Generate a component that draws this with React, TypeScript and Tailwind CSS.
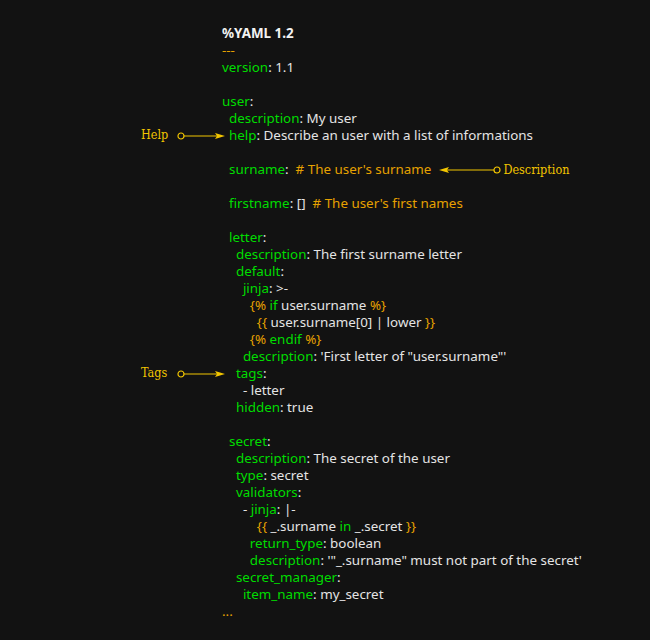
import React from 'react'

type Seg = [string, 'k' | 't' | 'o' | 'b']

const colorOf = {
  k: 'text-[#00dd00]',
  t: 'text-[#e4e4e4]',
  o: 'text-[#e6a100]',
  b: 'text-[#f2f2f2] font-bold',
}

const lines: { segs: Seg[]; left?: string; right?: string }[] = [
  { segs: [['%YAML 1.2', 'b']] },
  { segs: [['---', 'o']] },
  { segs: [['version', 'k'], [': 1.1', 't']] },
  { segs: [] },
  { segs: [['user', 'k'], [':', 't']] },
  { segs: [['  description', 'k'], [': My user', 't']] },
  { segs: [['  help', 'k'], [': Describe an user with a list of informations', 't']], left: 'Help' },
  { segs: [] },
  { segs: [['  surname', 'k'], [':  ', 't'], ["# The user's surname", 'o']], right: 'Description' },
  { segs: [] },
  { segs: [['  firstname', 'k'], [': []  ', 't'], ["# The user's first names", 'o']] },
  { segs: [] },
  { segs: [['  letter', 'k'], [':', 't']] },
  { segs: [['    description', 'k'], [': The first surname letter', 't']] },
  { segs: [['    default', 'k'], [':', 't']] },
  { segs: [['      jinja', 'k'], [': >-', 't']] },
  { segs: [['        {% ', 'o'], ['if', 'k'], [' user.surname ', 't'], ['%}', 'o']] },
  { segs: [['          {{ ', 'o'], ['user.surname[0] | lower', 't'], [' }}', 'o']] },
  { segs: [['        {% ', 'o'], ['endif', 'k'], [' %}', 'o']] },
  { segs: [['      description', 'k'], [': \'First letter of "user.surname"\'', 't']] },
  { segs: [['    tags', 'k'], [':', 't']], left: 'Tags' },
  { segs: [['      - letter', 't']] },
  { segs: [['    hidden', 'k'], [': true', 't']] },
  { segs: [] },
  { segs: [['  secret', 'k'], [':', 't']] },
  { segs: [['    description', 'k'], [': The secret of the user', 't']] },
  { segs: [['    type', 'k'], [': secret', 't']] },
  { segs: [['    validators', 'k'], [':', 't']] },
  { segs: [['      - ', 't'], ['jinja', 'k'], [': |-', 't']] },
  { segs: [['          {{ ', 'o'], ['_.surname ', 't'], ['in', 'k'], [' _.secret ', 't'], ['}}', 'o']] },
  { segs: [['        return_type', 'k'], [': boolean', 't']] },
  { segs: [['        description', 'k'], [': \'"_.surname" must not part of the secret\'', 't']] },
  { segs: [['    secret_manager', 'k'], [':', 't']] },
  { segs: [['      item_name', 'k'], [': my_secret', 't']] },
  { segs: [['...', 'o']] },
]

function ArrowRight() {
  return (
    <svg width="48" height="8" viewBox="0 0 48 8" className="block">
      <circle cx="4" cy="4" r="3" fill="none" stroke="#f2c500" strokeWidth="1.2" />
      <line x1="7" y1="4" x2="40" y2="4" stroke="#f2c500" strokeWidth="1.2" />
      <path d="M48 4 L38 1 L40 4 L38 7 Z" fill="#f2c500" />
    </svg>
  )
}

function ArrowLeft() {
  return (
    <svg width="62" height="8" viewBox="0 0 62 8" className="block">
      <path d="M0 4 L10 1 L8 4 L10 7 Z" fill="#f2c500" />
      <line x1="8" y1="4" x2="55" y2="4" stroke="#f2c500" strokeWidth="1.2" />
      <circle cx="58" cy="4" r="3" fill="none" stroke="#f2c500" strokeWidth="1.2" />
    </svg>
  )
}

export default function App() {
  return (
    <div className="w-[650px] h-[640px] bg-[#121212] pt-[25px] overflow-hidden">
      {lines.map((line, i) => (
        <div key={i} className="flex h-[17px] items-center">
          <div className="w-[222px] shrink-0 flex items-center">
            {line.left && (
              <div className="ml-[141px] flex items-center gap-[6px]">
                <span className="text-[12.5px] text-[#f2c500] font-['DejaVu_Serif_Condensed','DejaVu_Serif',serif] w-[30px]">
                  {line.left}
                </span>
                <ArrowRight />
              </div>
            )}
          </div>
          <div className="whitespace-pre text-[13.4px] leading-[17px] font-['Noto_Sans',sans-serif] flex items-center">
            {line.segs.map((s, j) => (
              <span key={j} className={colorOf[s[1]]}>
                {s[0]}
              </span>
            ))}
            {line.right && (
              <div className="flex items-center ml-[8px] gap-[2px]">
                <ArrowLeft />
                <span className="text-[12.5px] text-[#f2c500] font-['DejaVu_Serif_Condensed','DejaVu_Serif',serif]">
                  {line.right}
                </span>
              </div>
            )}
          </div>
        </div>
      ))}
    </div>
  )
}
